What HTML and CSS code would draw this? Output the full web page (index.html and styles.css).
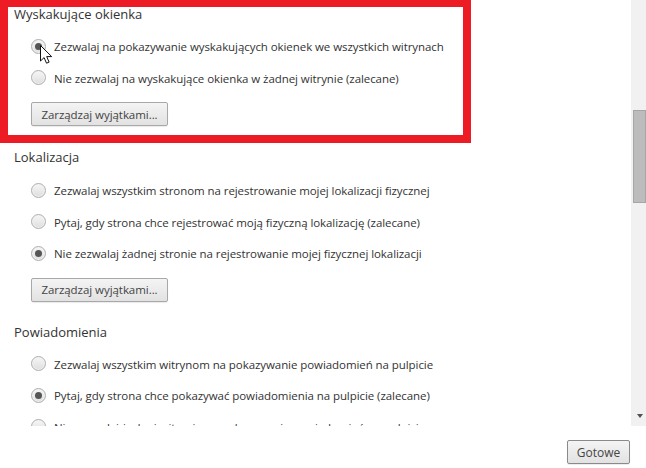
FILE: index.html
```html
<!DOCTYPE html>
<html lang="pl">
<head>
<meta charset="utf-8">
<title>Ustawienia</title>
<link rel="stylesheet" href="styles.css">
</head>
<body>
<div class="dialog">
  <div class="viewport">
    <main class="content">
      <section class="group first">
        <h3>Wyskakujące okienka</h3>
        <label class="opt"><span class="radio on"></span>Zezwalaj na pokazywanie wyskakujących okienek we wszystkich witrynach</label>
        <label class="opt"><span class="radio"></span>Nie zezwalaj na wyskakujące okienka w żadnej witrynie (zalecane)</label>
        <button class="btn manage">Zarządzaj wyjątkami...</button>
      </section>
      <section class="group">
        <h3>Lokalizacja</h3>
        <label class="opt"><span class="radio"></span>Zezwalaj wszystkim stronom na rejestrowanie mojej lokalizacji fizycznej</label>
        <label class="opt"><span class="radio"></span>Pytaj, gdy strona chce rejestrować moją fizyczną lokalizację (zalecane)</label>
        <label class="opt"><span class="radio on"></span>Nie zezwalaj żadnej stronie na rejestrowanie mojej fizycznej lokalizacji</label>
        <button class="btn manage">Zarządzaj wyjątkami...</button>
      </section>
      <section class="group last">
        <h3>Powiadomienia</h3>
        <label class="opt"><span class="radio"></span>Zezwalaj wszystkim witrynom na pokazywanie powiadomień na pulpicie</label>
        <label class="opt"><span class="radio on"></span>Pytaj, gdy strona chce pokazywać powiadomienia na pulpicie (zalecane)</label>
        <label class="opt"><span class="radio"></span>Nie zezwalaj żadnej witrynie na pokazywanie powiadomień na pulpicie</label>
      </section>
    </main>
    <div class="scrollbar">
      <div class="thumb"></div>
      <div class="arrow"></div>
    </div>
  </div>
  <footer class="footer"><button class="btn done">Gotowe</button></footer>
</div>
<div class="highlight"></div>
<svg class="cursor" width="14" height="22" viewBox="0 0 14 22"><path d="M1.5 1.5V17l3.6-3.4 2.4 5.6 2.6-1.1-2.4-5.5h5z" fill="#fff" stroke="#111" stroke-width="1"/></svg>
</body>
</html>
```
FILE: styles.css
```css
* { box-sizing: border-box; }
html, body { margin: 0; height: 100%; background: #fff; overflow: hidden; }
body { font-family: "Open Sans", "Liberation Sans", sans-serif; font-size: 11.5px; color: #333; position: relative; }
.dialog { display: flex; flex-direction: column; height: 468px; }
.viewport { display: flex; height: 426px; }
.content { flex: 1; height: 426px; padding: 0 0 0 14px; overflow: hidden; }
.group { display: flex; flex-direction: column; align-items: flex-start; margin-bottom: 21px; }
.group.first { margin-top: 5px; margin-bottom: 22px; }
h3 { margin: 0 0 9px; font-size: 13px; font-weight: 400; line-height: 18px; color: #333; }
.first h3 { margin-bottom: 8px; }
.last h3 { margin-bottom: 8px; }
.opt { display: flex; align-items: center; height: 31.5px; margin-left: 17px; white-space: nowrap; letter-spacing: -0.07px; }
.radio { width: 15px; height: 15px; margin: -1px 8px 0 0; border-radius: 50%; border: 1px solid #aeaeae; background: linear-gradient(#f6f6f6, #dedede); box-shadow: inset 0 0 0 1px #f2f2f2; display: flex; align-items: center; justify-content: center; }
.radio.on::after { content: ""; width: 7px; height: 7px; border-radius: 50%; background: #555; }
.btn { font: inherit; color: #444; height: 24px; padding: 0 10px; border: 1px solid #a8a8a8; border-radius: 2px; background: linear-gradient(#f4f4f4, #e2e2e2); box-shadow: 0 1px 1px rgba(0,0,0,.08); }
.manage { width: 137px; margin: 8px 0 0 17px; padding: 0; letter-spacing: -0.05px; }
.scrollbar { width: 15px; background: #f1f1f1; display: flex; flex-direction: column; align-items: flex-end; justify-content: space-between; padding-top: 110px; }
.thumb { width: 13px; height: 93px; background: #bcbcbc; border: 1px solid #a6a6a6; }
.arrow { width: 0; height: 0; margin: 0 3px 8px 0; border-top: 4px solid #505050; border-left: 3.5px solid transparent; border-right: 3.5px solid transparent; }
.footer { flex: 1; display: flex; justify-content: flex-end; align-items: flex-start; padding: 14px 16px 0 0; }
.done { width: 63px; padding: 0; border-color: #8a8a8a; font-size: 12px; }
.highlight { position: absolute; left: 0; top: 0; width: 471px; height: 143px; border: solid #ed1c24; border-width: 7px 8px 8px 8px; pointer-events: none; }
.cursor { position: absolute; left: 39px; top: 44px; }
```
